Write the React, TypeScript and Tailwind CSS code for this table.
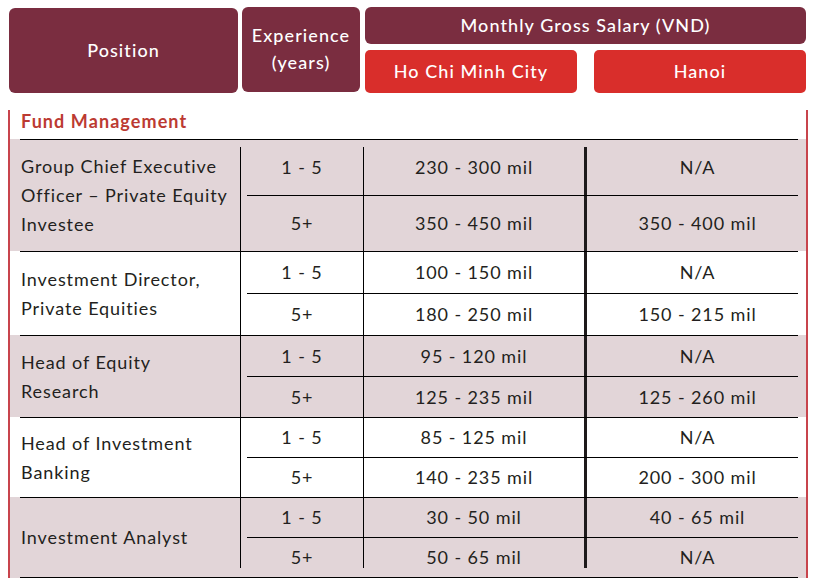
const rows = [
  { title: ["Group Chief Executive", "Officer – Private Equity", "Investee"], h: "h-[55px]", shaded: true, data: [["1 - 5", "230 - 300 mil", "N/A"], ["5+", "350 - 450 mil", "350 - 400 mil"]] },
  { title: ["Investment Director,", "Private Equities"], h: "h-[41px]", shaded: false, data: [["1 - 5", "100 - 150 mil", "N/A"], ["5+", "180 - 250 mil", "150 - 215 mil"]] },
  { title: ["Head of Equity", "Research"], h: "h-[40px]", shaded: true, data: [["1 - 5", "95 - 120 mil", "N/A"], ["5+", "125 - 235 mil", "125 - 260 mil"]] },
  { title: ["Head of Investment", "Banking"], h: "h-[39px]", shaded: false, data: [["1 - 5", "85 - 125 mil", "N/A"], ["5+", "140 - 235 mil", "200 - 300 mil"]] },
  { title: ["Investment Analyst"], h: "h-[39px]", shaded: true, data: [["1 - 5", "30 - 50 mil", "40 - 65 mil"], ["5+", "50 - 65 mil", "N/A"]] },
];

function SubRow({ cells, h, first, last }: { cells: string[]; h: string; first: boolean; last: boolean }) {
  const vm = first ? "mt-[7px]" : last ? "mb-[9px]" : "";
  return (
    <div className={`flex ${h}`}>
      <div className="w-[122px] flex items-center justify-center">{cells[0]}</div>
      <div className={`w-px bg-black ${vm}`} />
      <div className="w-[220px] flex items-center justify-center">{cells[1]}</div>
      <div className={`w-[3px] bg-[#1e1a1b] ${vm}`} />
      <div className="flex-1 pl-[10px] flex items-center justify-center">{cells[2]}</div>
    </div>
  );
}

export default function App() {
  return (
    <div className="w-[816px] h-[578px] bg-white overflow-hidden text-[18px] tracking-[0.05em] text-[#231f20]" style={{ fontFamily: "Lato, 'Noto Sans', sans-serif" }}>
      {/* header */}
      <div className="flex items-start pt-[7px] pl-[9px] text-white font-medium tracking-[0.06em]">
        <div className="mt-[1px] w-[229px] h-[85px] rounded-[6px] bg-[#7a2d40] flex items-center justify-center">Position</div>
        <div className="ml-[4px] w-[118px] h-[85px] rounded-[6px] bg-[#7a2d40] flex flex-col items-center justify-center leading-[27px] pb-[1px]">
          <span>Experience</span>
          <span>(years)</span>
        </div>
        <div className="ml-[5px] w-[441px] flex flex-col">
          <div className="h-[37px] rounded-[6px] bg-[#7a2d40] flex items-center justify-center">Monthly Gross Salary (VND)</div>
          <div className="mt-[6px] flex gap-[17px]">
            <div className="w-[212px] h-[43px] rounded-[5px] bg-[#d92e2b] flex items-center justify-center">Ho Chi Minh City</div>
            <div className="w-[212px] h-[43px] rounded-[5px] bg-[#d92e2b] flex items-center justify-center">Hanoi</div>
          </div>
        </div>
      </div>

      {/* table */}
      <div className="mt-[17px] ml-[8px] w-[800px] border-x-2 border-[#c8444c]">
        <div className="h-[29px] pt-[1px] pl-[11px] leading-[20px] text-[18px] tracking-[0.06em] font-bold text-[#bc3a32]">Fund Management</div>
        {rows.map((r, i) => {
          const first = i === 0;
          const last = i === rows.length - 1;
          return (
            <div key={i} className={r.shaded ? "bg-[#e2d5d8]" : "bg-white"}>
              <div className={`ml-[10px] mr-[8px] flex border-t border-black ${last ? "border-b" : ""}`}>
                <div className="w-[220px] pl-[1px] flex flex-col justify-center leading-[29px]">
                  {r.title.map((t) => (
                    <span key={t}>{t}</span>
                  ))}
                </div>
                <div className={`w-px bg-black ${first ? "mt-[7px]" : ""} ${last ? "mb-[9px]" : ""}`} />
                <div className="flex-1 flex flex-col">
                  <SubRow cells={r.data[0]} h={r.h} first={first} last={false} />
                  <div className="ml-[6px] h-px bg-black" />
                  <SubRow cells={r.data[1]} h={r.h} first={false} last={last} />
                </div>
              </div>
            </div>
          );
        })}
      </div>
    </div>
  );
}
